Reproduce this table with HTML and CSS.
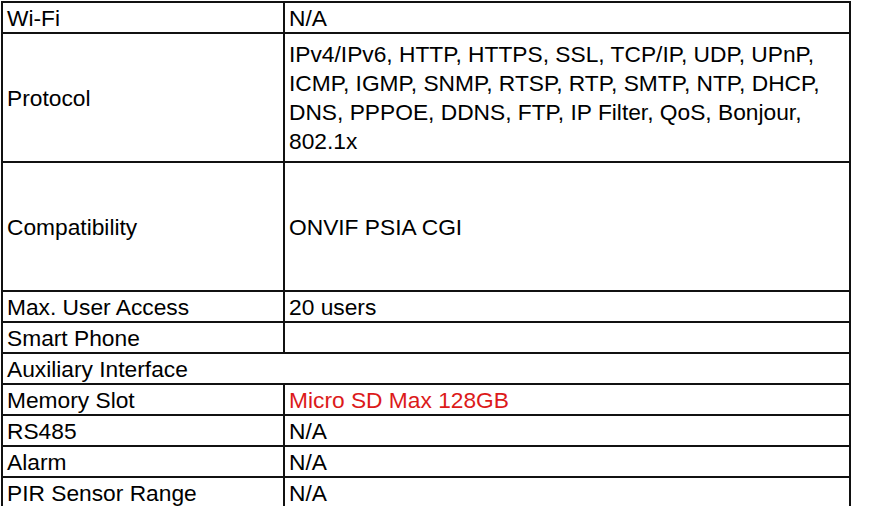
FILE: index.html
```html
<!DOCTYPE html>
<html lang="en">
<head>
  <meta charset="UTF-8" />
  <title>Specifications</title>
  <link rel="stylesheet" href="styles.css">
</head>
<body>
  <!-- Spec table -->
  <table class="spec-table">
    <colgroup>
      <col class="col-name">
      <col class="col-value">
    </colgroup>
    <tr class="row">
      <td>Wi-Fi</td>
      <td>N/A</td>
    </tr>
    <tr class="row-tall">
      <td>Protocol</td>
      <td class="multi">IPv4/IPv6, HTTP, HTTPS, SSL, TCP/IP, UDP, UPnP,<br>ICMP, IGMP, SNMP, RTSP, RTP, SMTP, NTP, DHCP,<br>DNS, PPPOE, DDNS, FTP, IP Filter, QoS, Bonjour,<br>802.1x</td>
    </tr>
    <tr class="row-tall">
      <td>Compatibility</td>
      <td>ONVIF PSIA CGI</td>
    </tr>
    <tr class="row">
      <td>Max. User Access</td>
      <td>20 users</td>
    </tr>
    <tr class="row">
      <td>Smart Phone</td>
      <td></td>
    </tr>
    <tr class="row">
      <td colspan="2">Auxiliary Interface</td>
    </tr>
    <tr class="row">
      <td>Memory Slot</td>
      <td class="highlight">Micro SD Max 128GB</td>
    </tr>
    <tr class="row">
      <td>RS485</td>
      <td>N/A</td>
    </tr>
    <tr class="row">
      <td>Alarm</td>
      <td>N/A</td>
    </tr>
    <tr class="row">
      <td>PIR Sensor Range</td>
      <td>N/A</td>
    </tr>
  </table>
</body>
</html>
```

FILE: styles.css
```css
body {
  margin: 0;
  padding: 1px 0 0 1px;
  background: white;
  font-family: 'Liberation Sans', Arial, sans-serif;
  color: #000;
}

.spec-table {
  border-collapse: collapse;
  width: 850px;
  table-layout: fixed;
  font-size: 22.75px;
}

.col-name {
  width: 282px;
}

.spec-table td {
  border: 2px solid #111;
  padding: 1px 3px 0 4px;
  vertical-align: middle;
  white-space: nowrap;
}

.row td {
  height: 28px;
}

.row-tall td {
  height: 126px;
}

.multi {
  line-height: 29px;
  padding-top: 3px;
}

.highlight {
  color: #dc1a1a;
}
```
